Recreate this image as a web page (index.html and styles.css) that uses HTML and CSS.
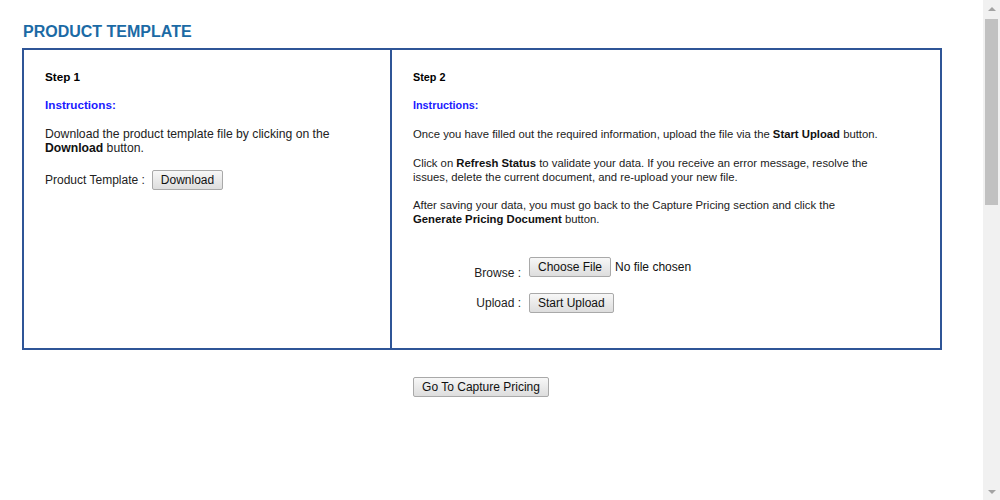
FILE: index.html
```html
<!DOCTYPE html>
<html lang="en">
<head>
<meta charset="utf-8">
<title>Product Template</title>
<link rel="stylesheet" href="styles.css">
</head>
<body>
<div class="app">
  <main class="page">
    <h1 class="title">PRODUCT TEMPLATE</h1>
    <div class="steps">
      <section class="step step-left">
        <div class="step-label">Step 1</div>
        <div class="instructions">Instructions:</div>
        <p class="text">Download the product template file by clicking on the <b>Download</b> button.</p>
        <div class="field-row">
          <span class="field-label">Product Template :</span>
          <button class="btn" type="button">Download</button>
        </div>
      </section>
      <section class="step step-right">
        <div class="step-label">Step 2</div>
        <div class="instructions">Instructions:</div>
        <div class="text-block">
          <p class="text">Once you have filled out the required information, upload the file via the <b>Start Upload</b> button.</p>
          <p class="text">Click on <b>Refresh Status</b> to validate your data. If you receive an error message, resolve the issues, delete the current document, and re-upload your new file.</p>
          <p class="text">After saving your data, you must go back to the Capture Pricing section and click the <b>Generate Pricing Document</b> button.</p>
        </div>
        <div class="upload-form">
          <span class="form-label form-label-browse">Browse :</span>
          <div class="form-control">
            <button class="btn" type="button">Choose File</button>
            <span class="file-status">No file chosen</span>
          </div>
          <span class="form-label">Upload :</span>
          <div class="form-control">
            <button class="btn" type="button">Start Upload</button>
          </div>
        </div>
      </section>
    </div>
    <div class="actions">
      <button class="btn" type="button">Go To Capture Pricing</button>
    </div>
  </main>
  <aside class="scrollbar">
    <div class="sb-arrow"><span class="tri tri-up"></span></div>
    <div class="sb-track"><div class="sb-thumb"></div></div>
    <div class="sb-arrow"><span class="tri tri-down"></span></div>
  </aside>
</div>
</body>
</html>
```
FILE: styles.css
```css
html, body {
  margin: 0;
  padding: 0;
  overflow: hidden;
  background: #fff;
}

body {
  font-family: "Liberation Sans", Arial, sans-serif;
  font-size: 12px;
  line-height: 14px;
  color: #222;
}

.app {
  display: flex;
  height: 500px;
  width: 1000px;
}

.page {
  flex: 1;
  padding-left: 22px;
  min-width: 0;
}

.title {
  margin: 23px 0 7px 1px;
  font-size: 16px;
  line-height: 18px;
  font-weight: bold;
  color: #1b6aa5;
}

.steps {
  display: grid;
  grid-template-columns: 368px 548px;
  width: 916px;
  height: 298px;
  border: 2px solid #2f5597;
}

.step {
  padding: 20px 21px 0 21px;
}

.step-left {
  border-right: 2px solid #2f5597;
}

.step-label {
  font-weight: bold;
  color: #000;
  margin-bottom: 14px;
  font-size: 11.7px;
}

.instructions {
  font-weight: bold;
  color: #1a1aff;
  margin-bottom: 15px;
  font-size: 11.7px;
}

.step-right .step-label,
.step-right .instructions {
  font-size: 10.8px;
}

.text {
  margin: 0 0 14.5px 0;
  font-size: 12.2px;
}

.step-right .text {
  font-size: 11.3px;
}

.text b {
  color: #111;
}

.text-block {
  width: 470px;
}

.field-row {
  display: flex;
  align-items: baseline;
  gap: 7px;
  margin-top: 14px;
  font-size: 12px;
}

.btn {
  font-family: "Liberation Sans", Arial, sans-serif;
  font-size: 12px;
  line-height: 14px;
  color: #111;
  padding: 2px 8px;
  border: 1px solid #a9a9a9;
  border-radius: 2px;
  background: linear-gradient(#f7f7f7, #dddddd);
  margin: 0;
}

.upload-form {
  display: grid;
  grid-template-columns: 108px auto;
  grid-auto-rows: 20px;
  column-gap: 8px;
  row-gap: 16px;
  margin-top: 31px;
}

.form-label {
  text-align: right;
  padding-top: 3px;
}

.form-label-browse {
  padding-top: 9px;
}

.form-control {
  display: flex;
  align-items: baseline;
  gap: 4px;
}

.file-status {
  color: #111;
}

.actions {
  width: 918px;
  text-align: center;
  margin-top: 27px;
}

.scrollbar {
  width: 17px;
  background: #f1f1f1;
  display: flex;
  flex-direction: column;
}

.sb-arrow {
  height: 17px;
  display: flex;
  align-items: center;
  justify-content: center;
}

.tri {
  width: 0;
  height: 0;
  border-left: 4px solid transparent;
  border-right: 4px solid transparent;
}

.tri-up {
  border-bottom: 4px solid #a3a3a3;
}

.tri-down {
  border-top: 4px solid #a3a3a3;
}

.sb-track {
  flex: 1;
  padding: 2px 2px 0 2px;
}

.sb-thumb {
  height: 186px;
  background: #c1c1c1;
}
```
